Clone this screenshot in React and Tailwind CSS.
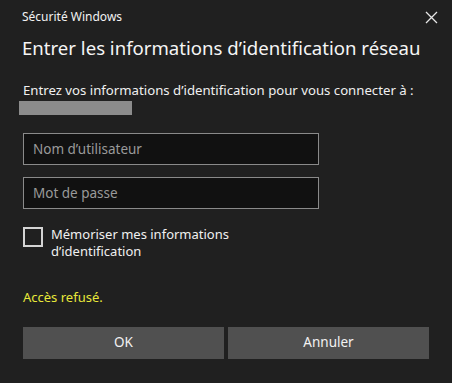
import React from 'react';

const font = { fontFamily: '"Noto Sans", "Open Sans", sans-serif' };

export default function App() {
  return (
    <div className="w-[452px] h-[383px] bg-[#202020] text-white relative" style={font}>
      <div className="flex items-center justify-between pl-[22px] pr-[14px] pt-[7px] h-[26px]">
        <span className="text-[12px] text-[#f2f2f2]">Sécurité Windows</span>
        <svg width="13" height="13" viewBox="0 0 13 13" className="mt-[1px]">
          <path d="M1 1 L12 12 M12 1 L1 12" stroke="#e6e6e6" strokeWidth="1.3" />
        </svg>
      </div>
      <h1 className="pl-[22px] mt-[8px] text-[18.6px] leading-[28px] text-[#f5f5f5]">
        Entrer les informations d’identification réseau
      </h1>
      <p className="pl-[23px] mt-[20px] text-[13.2px] leading-[17px] text-[#f0f0f0]">
        Entrez vos informations d’identification pour vous connecter à :
      </p>
      <div className="ml-[19px] mt-[2px] w-[113px] h-[14px] bg-[#8c8c8c]"></div>

      <div className="px-[23px] mt-[18px] flex flex-col gap-[12px]">
        <div className="w-[296px] h-[32px] border border-[#8a8a8a] bg-[#111111] flex items-center px-[9px] text-[13.5px] text-[#9a9a9a]">
          Nom d’utilisateur
        </div>
        <div className="w-[296px] h-[32px] border border-[#8a8a8a] bg-[#111111] flex items-center px-[9px] text-[13.5px] text-[#9a9a9a]">
          Mot de passe
        </div>
      </div>

      <div className="flex items-start pl-[23px] mt-[18px] gap-[8px]">
        <div className="w-[20px] h-[20px] border-2 border-[#d4d4d4] shrink-0"></div>
        <span className="text-[13px] leading-[17px] text-[#f0f0f0] -mt-[1px]">
          Mémoriser mes informations<br />d’identification
        </span>
      </div>

      <p className="pl-[23px] mt-[28px] text-[13px] text-[#e8e83a]">Accès refusé.</p>

      <div className="flex gap-[4px] pl-[23px] mt-[19px]">
        <button className="w-[201px] h-[32px] bg-[#505050] text-[13.5px] text-[#f2f2f2]">OK</button>
        <button className="w-[201px] h-[32px] bg-[#505050] text-[13.5px] text-[#f2f2f2]">Annuler</button>
      </div>
    </div>
  );
}
